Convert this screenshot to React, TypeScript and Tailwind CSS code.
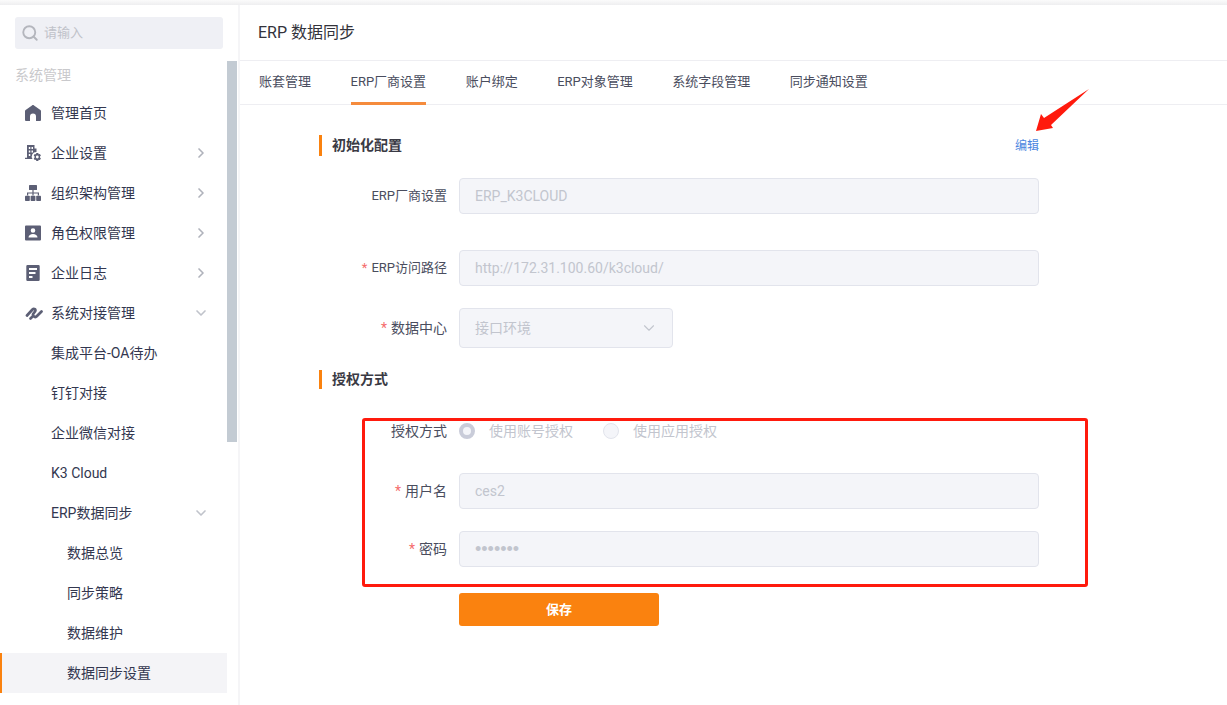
import React from 'react';
import { ChevronDown, ChevronRight, Search } from 'lucide-react';

const FONT = { fontFamily: 'Roboto, "Noto Sans CJK SC", sans-serif' };

const HomeIcon = () => (
  <svg viewBox="0 0 16 16" className="w-4 h-4" fill="#5c5f75">
    <path d="M8 0 C8.400 0 8.700 .15 9 .4 L15.400 5 C15.800 5.300 16 5.700 16 6.200 V15 a1 1 0 0 1 -1 1 H11 V11.500 a3 3 0 0 0 -6 0 V16 H1 a1 1 0 0 1 -1 -1 V6.200 C0 5.700 .2 5.300 .6 5 L7 .4 C7.300 .15 7.600 0 8 0 Z" />
  </svg>
);

const BuildingIcon = () => (
  <svg viewBox="0 0 16 16" className="w-4 h-4" fill="#5c5f75">
    <path fillRule="evenodd" d="M2 0 H9.500 V3.500 H11.500 V7 A4.500 4.500 0 0 0 7.500 14 H0 V12.800 H2 Z M3.800 2 V4 H5.300 V2 Z M6.500 2 V4 H8 V2 Z M3.800 5.500 V7.500 H5.300 V5.500 Z M6.500 5.500 V7.500 H8 V5.500 Z M3.800 9 V11 H5.300 V9 Z" />
    <path fillRule="evenodd" d="M11.300 8 H13.300 L13.600 9.300 L14.900 8.900 L15.900 10.600 L15 11.500 V12.500 L15.900 13.400 L14.900 15.100 L13.600 14.700 L13.300 16 H11.300 L11 14.700 L9.700 15.100 L8.700 13.400 L9.600 12.500 V11.500 L8.700 10.600 L9.700 8.900 L11 9.300 Z M12.300 10.600 A1.400 1.400 0 1 0 12.300 13.400 A1.400 1.400 0 1 0 12.300 10.600 Z" />
  </svg>
);

const SitemapIcon = () => (
  <svg viewBox="0 0 16 16" className="w-4 h-4" fill="#5c5f75">
    <rect x="4" y="0" width="8" height="5" rx="0.600" />
    <path d="M7.400 5 H8.600 V7.400 H14 V10.500 H12.800 V8.600 H8.600 V10.500 H7.400 V8.600 H3.200 V10.500 H2 V7.400 H7.400 Z" />
    <rect x="0" y="10.800" width="4.800" height="5.200" rx="0.800" />
    <rect x="5.600" y="10.800" width="4.800" height="5.200" rx="0.800" />
    <rect x="11.200" y="10.800" width="4.800" height="5.200" rx="0.800" />
  </svg>
);

const ContactIcon = () => (
  <svg viewBox="0 0 16 16" className="w-4 h-4" fill="#5c5f75">
    <path fillRule="evenodd" d="M1 .5 H15 a1 1 0 0 1 1 1 V14.500 a1 1 0 0 1 -1 1 H1 a1 1 0 0 1 -1 -1 V1.500 a1 1 0 0 1 1 -1 Z M8 3.200 a2.300 2.300 0 1 0 0 4.600 a2.300 2.300 0 1 0 0 -4.600 Z M3.500 12.500 H12.500 C12.500 10.300 10.400 9 8 9 C5.600 9 3.500 10.300 3.500 12.500 Z" />
  </svg>
);

const LogIcon = () => (
  <svg viewBox="0 0 16 16" className="w-4 h-4" fill="#5c5f75">
    <path fillRule="evenodd" d="M2.500 0 H13.500 a1.200 1.200 0 0 1 1.200 1.200 V14.800 a1.200 1.200 0 0 1 -1.200 1.200 H2.500 a1.200 1.200 0 0 1 -1.200 -1.200 V1.200 a1.200 1.200 0 0 1 1.200 -1.200 Z M4 3 V5 H12 V3 Z M4 7 V9 H10.500 V7 Z M4 11 V13 H7.500 V11 Z" />
  </svg>
);

const LinkIcon = () => (
  <svg viewBox="0 0 18 16" className="w-[18px] h-4" fill="none" stroke="#5c5f75" strokeWidth="2.700" strokeLinecap="round" strokeLinejoin="round">
    <path d="M2 10.500 L7.500 4.500 C9 3 11.500 4.500 10 6.500 L8.500 8.500 C7 10.500 9.500 13 11.500 11.500 L16.500 6.500" />
    <path d="M5.500 13.500 L7 12" />
  </svg>
);

const menuTop = [
  { name: '管理首页', icon: <HomeIcon />, arrow: null },
  { name: '企业设置', icon: <BuildingIcon />, arrow: 'right' },
  { name: '组织架构管理', icon: <SitemapIcon />, arrow: 'right' },
  { name: '角色权限管理', icon: <ContactIcon />, arrow: 'right' },
  { name: '企业日志', icon: <LogIcon />, arrow: 'right' },
  { name: '系统对接管理', icon: <LinkIcon />, arrow: 'down' },
];

const Arrow = ({ dir }: { dir: string | null }) => {
  if (dir === 'right') return <ChevronRight size={16} strokeWidth={2.5} className="text-[#b0b3bc] ml-auto mr-[18px]" />;
  if (dir === 'down') return <ChevronDown size={16} strokeWidth={2.5} className="text-[#c0c3cb] ml-auto mr-[18px]" />;
  return null;
};

const Sidebar = () => (
  <div className="w-[240px] shrink-0 border-r-2 border-[#f5f5f7] h-full flex flex-col overflow-hidden">
    <div className="pl-[15px] pt-3 h-[56px] shrink-0">
      <div className="w-[208px] h-[32px] bg-[#eff0f5] rounded-[3px] flex items-center pl-[6px] gap-[5px]">
        <Search size={18} strokeWidth={2.5} className="text-[#b4b6bd]" />
        <span className="text-[13px] text-[#c0c2c9]">请输入</span>
      </div>
    </div>
    <div className="flex flex-1 min-h-0">
      <div className="w-[227px] shrink-0 text-[14px] text-[#33374f]">
        <div className="h-[32px] pl-[15px] pt-[4px] text-[14px] text-[#c9c9cc] leading-[20px]">系统管理</div>
        {menuTop.map((item) => (
          <div key={item.name} className="h-[40px] flex items-center">
            <span className="w-[51px] pl-[25px] flex justify-start">{item.icon}</span>
            <span>{item.name}</span>
            <Arrow dir={item.arrow} />
          </div>
        ))}
        <div className="h-[40px] flex items-center pl-[51px]">集成平台-OA待办</div>
        <div className="h-[40px] flex items-center pl-[51px]">钉钉对接</div>
        <div className="h-[40px] flex items-center pl-[51px]">企业微信对接</div>
        <div className="h-[40px] flex items-center pl-[51px]">K3 Cloud</div>
        <div className="h-[40px] flex items-center pl-[51px]">
          <span>ERP数据同步</span>
          <Arrow dir="down" />
        </div>
        <div className="h-[40px] flex items-center pl-[67px]">数据总览</div>
        <div className="h-[40px] flex items-center pl-[67px]">同步策略</div>
        <div className="h-[40px] flex items-center pl-[67px]">数据维护</div>
        <div className="h-[40px] flex items-center pl-[65px] bg-[#f4f4f7] border-l-2 border-[#fa820f]">数据同步设置</div>
      </div>
      <div className="w-[10px] h-[381px] bg-[#c3cbd3]" />
    </div>
  </div>
);

const tabs = ['账套管理', 'ERP厂商设置', '账户绑定', 'ERP对象管理', '系统字段管理', '同步通知设置'];

const SectionTitle = ({ title, className }: { title: string; className: string }) => (
  <div className={`flex items-center border-l-[3px] border-[#fa820f] pl-[10px] text-[14px] font-bold text-[#3a3a44] ${className}`}>
    {title}
  </div>
);

const Row = ({ label, required, compact, className, children }: { label: string; required?: boolean; compact?: boolean; className?: string; children: React.ReactNode }) => (
  <div className={`flex items-center ${className ?? ''}`}>
    <label className={`w-[128px] shrink-0 text-right text-[#4a4d5e] ${compact ? 'text-[13px]' : 'text-[14px]'}`}>
      {required && <span className="text-[#f56c6c] mr-1">*</span>}
      {label}
    </label>
    <div className="ml-[12px] flex-1">{children}</div>
  </div>
);

const Field = ({ value, password }: { value: string; password?: boolean }) => (
  <div
    className={`h-[36px] bg-[#f4f5f9] border border-[#e2e4ec] rounded-[4px] flex items-center pl-[15px] text-[#c2c5ce] ${
      password ? "text-[18px] font-['Liberation_Sans']" : 'text-[14px]'
    }`}
  >
    {value}
  </div>
);

const RedBox = () => (
  <div className="absolute left-[362px] top-[418px] w-[726px] h-[169px] border-[3px] border-[#ff1a0d] rounded-[3px] pointer-events-none" />
);

const RedArrow = () => (
  <svg className="absolute left-[1030px] top-[85px]" width="64" height="50" viewBox="0 0 64 50">
    <polygon points="59,4 21,40 23,43 6,46 11,29 14,33" fill="#ff1a0d" />
  </svg>
);

export default function App() {
  return (
    <div className="relative w-[1227px] h-[705px] overflow-hidden bg-white" style={FONT}>
      <div className="h-[5px] bg-gradient-to-b from-[#fbfbfb] to-[#eeeef0]" />
      <div className="flex h-[700px]">
        <Sidebar />
        <div className="flex-1 min-w-0">
          <div className="h-[56px] border-b border-[#eeeef2] flex items-center pl-[18px] text-[16px] text-[#33333b]">ERP 数据同步</div>
          <div className="h-[44px] border-b border-[#eeeef2] flex gap-[39.5px] pl-[19px] text-[13px] text-[#4a4d5e]">
            {tabs.map((tab) => (
              <div
                key={tab}
                className={`h-[44px] flex items-center border-b-[3px] pt-[1px] ${tab === 'ERP厂商设置' ? 'border-[#f58b3c]' : 'border-transparent'}`}
              >
                {tab}
              </div>
            ))}
          </div>
          <div className="pl-[79px] w-[799px]">
            <div className="flex items-center justify-between mt-[30px]">
              <SectionTitle title="初始化配置" className="h-[21px]" />
              <span className="text-[12px] text-[#4a86e0]">编辑</span>
            </div>
            <Row label="ERP厂商设置" compact className="mt-[22px]">
              <Field value="ERP_K3CLOUD" />
            </Row>
            <Row label="ERP访问路径" required compact className="mt-[36px]">
              <Field value="http://172.31.100.60/k3cloud/" />
            </Row>
            <Row label="数据中心" required className="mt-[22px]">
              <div className="w-[214px] h-[40px] bg-[#f4f5f9] border border-[#e2e4ec] rounded-[4px] flex items-center pl-[15px] pr-[14px] text-[14px] text-[#c2c5ce]">
                <span>接口环境</span>
                <ChevronDown size={18} strokeWidth={1.5} className="ml-auto text-[#c2c5ce]" />
              </div>
            </Row>
            <SectionTitle title="授权方式" className="h-[19px] mt-[22px]" />
            <Row label="授权方式" className="mt-[32px] h-[20px]">
              <div className="flex items-center text-[14px] text-[#c2c5ce]">
                <span className="w-[16px] h-[16px] rounded-full border-[4px] border-[#c9ccd9] bg-[#f4f5f9]" />
                <span className="ml-[14px] w-[114px]">使用账号授权</span>
                <span className="w-[16px] h-[16px] rounded-full border border-[#e2e4ec] bg-[#f4f5f9]" />
                <span className="ml-[14px]">使用应用授权</span>
              </div>
            </Row>
            <Row label="用户名" required className="mt-[32px]">
              <Field value="ces2" />
            </Row>
            <Row label="密码" required className="mt-[22px]">
              <Field value="•••••••" password />
            </Row>
            <div className="ml-[140px] mt-[26px] w-[200px] h-[33px] bg-[#fa820f] rounded-[3px] flex items-center justify-center text-[13px] font-bold text-white">
              保存
            </div>
          </div>
        </div>
      </div>
      <RedBox />
      <RedArrow />
    </div>
  );
}
